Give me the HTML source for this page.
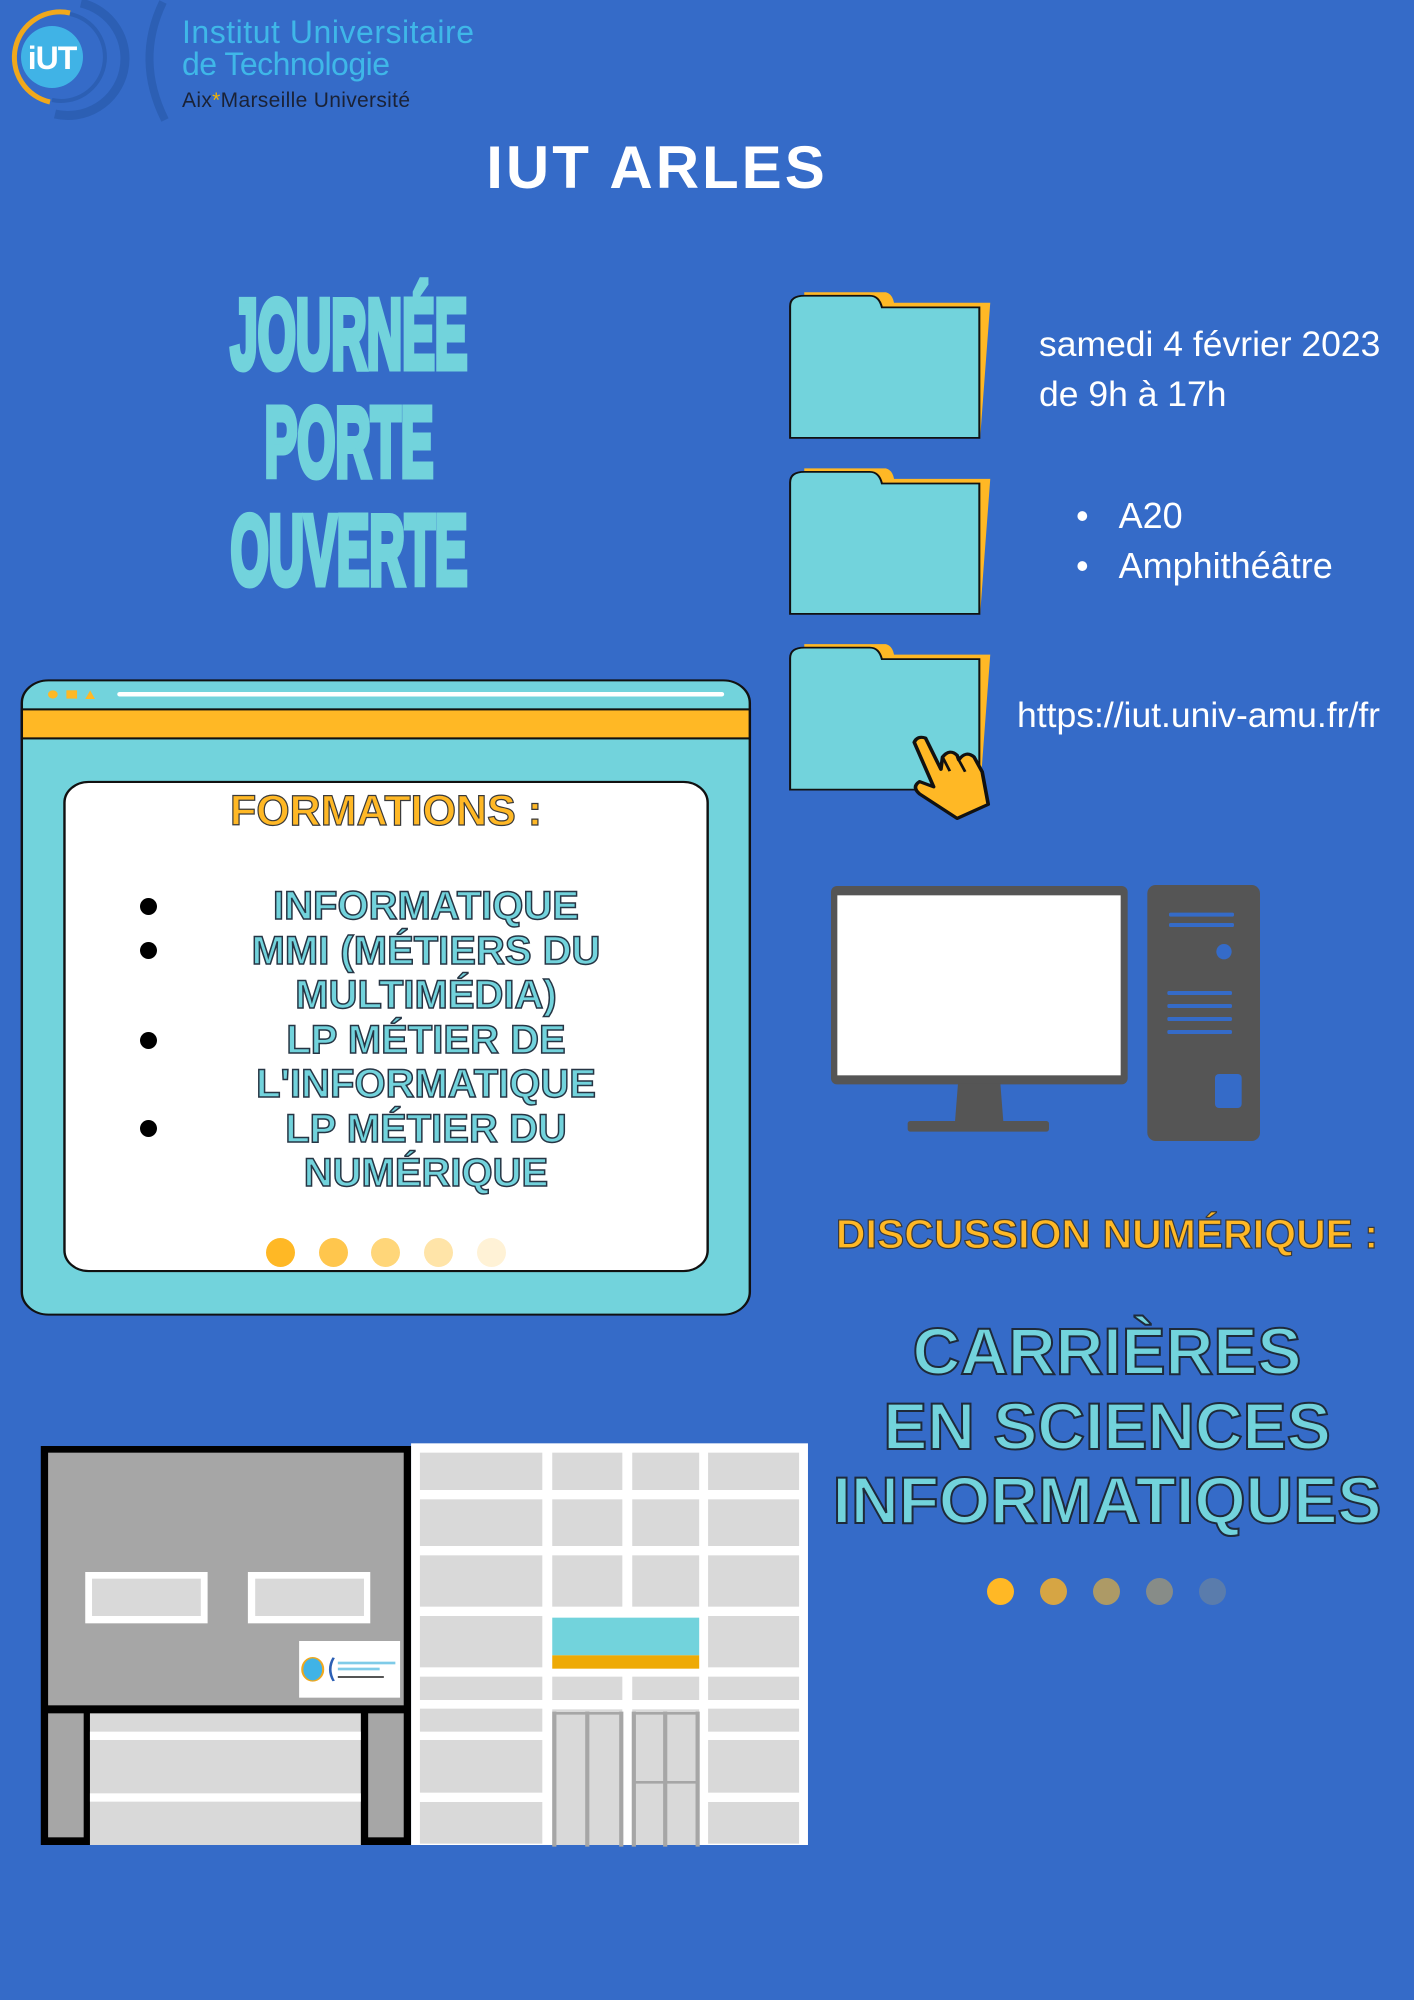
<!DOCTYPE html>
<html><head><meta charset="utf-8">
<style>
*{margin:0;padding:0;box-sizing:border-box}
body{width:1414px;height:2000px;background:#356bc8;position:relative;overflow:hidden;font-family:"Liberation Sans",sans-serif}
.abs{position:absolute}
.c{text-align:center;white-space:nowrap}
.cy{color:#72d3dc;-webkit-text-stroke:1.5px #263544;font-weight:bold}
.or{color:#ffb825;-webkit-text-stroke:1.2px #3a3a3a;font-weight:bold}
.dot{position:absolute;width:29px;height:29px;border-radius:50%}
</style></head><body>

<!-- logo -->
<svg class="abs" style="left:0;top:0" width="500" height="130">
  <path d="M81 3 A56 56 0 0 1 55 114" fill="none" stroke="#2c5fb4" stroke-width="9"/>
  <path d="M70 14 A43 43 0 0 1 52 100" fill="none" stroke="#2c5fb4" stroke-width="4"/>
  <path d="M70 13 A43 43 0 1 0 50 102" fill="none" stroke="#f0a81c" stroke-width="5"/>
  <circle cx="52" cy="57" r="31" fill="#40b3e6"/>
  <text x="52" y="69" text-anchor="middle" font-family="Liberation Sans" font-weight="bold" font-size="32" fill="#fff" letter-spacing="-1">iUT</text>
  <path d="M163 2 Q135 60 165 120" fill="none" stroke="#2c5fb4" stroke-width="8"/>
  <text x="182" y="43" font-family="Liberation Sans" font-size="32" fill="#3fb7e8" textLength="292">Institut Universitaire</text>
  <text x="182" y="75" font-family="Liberation Sans" font-size="32" fill="#3fb7e8" textLength="208">de Technologie</text>
  <text x="182" y="107" font-family="Liberation Sans" font-size="21" fill="#1a2236" textLength="228">Aix<tspan fill="#f4b400">*</tspan>Marseille Université</text>
</svg>

<div class="abs c" style="left:457px;width:400px;top:138px;font-size:60px;font-weight:bold;color:#fff;letter-spacing:3px;line-height:60px">IUT ARLES</div>

<!-- JOURNEE PORTE OUVERTE -->
<div class="abs c" style="left:99px;width:500px;top:280px;color:#72d3dc;-webkit-text-stroke:7px #72d3dc;font-weight:bold;font-size:98px;line-height:108px;transform:scaleX(0.5);transform-origin:250px 0">JOURNÉE<br>PORTE<br>OUVERTE</div>

<!-- folders -->
<svg class="abs" style="left:780px;top:280px" width="634" height="550" viewBox="0 0 1568 1568" preserveAspectRatio="none">
  <g id="f">
    <path d="M60 35 L262 35 Q278 40 282 65 L520 65 L495 450 L60 450 Z" fill="#ffb825"/>
    <path d="M25 450 L25 75 Q25 45 60 45 L222 45 Q245 45 252 78 L493 78 L493 450 Z" fill="#72d3dc" stroke="#111" stroke-width="5"/>
  </g>
  <use href="#f" y="502"/>
  <use href="#f" y="1003"/>
  <path d="M332 1318 Q340 1298 360 1306 L398 1395 L402 1360 Q420 1335 438 1355 L442 1368 Q460 1340 480 1360 L500 1402 L515 1495 L438 1535 L345 1465 Q325 1445 345 1430 L380 1445 Z" fill="#ffb825" stroke="#111" stroke-width="9" stroke-linejoin="round"/>
  <path d="M402 1360 L420 1400 M442 1368 L458 1402" stroke="#111" stroke-width="7" fill="none"/>
</svg>

<div class="abs" style="left:1039px;top:319px;color:#fff;font-size:35.5px;line-height:50px;white-space:nowrap">samedi 4 février 2023<br>de 9h à 17h</div>
<div class="abs" style="left:1076px;top:491px;color:#fff;font-size:36px;line-height:50px;white-space:nowrap">•&nbsp;&nbsp;&nbsp;A20<br>•&nbsp;&nbsp;&nbsp;Amphithéâtre</div>
<div class="abs" style="left:1017px;top:693px;color:#fff;font-size:35.5px;line-height:44px;white-space:nowrap">https://iut.univ-amu.fr/fr</div>

<!-- browser window -->
<svg class="abs" style="left:0;top:670px" width="760" height="650" viewBox="0 0 1568 1568" preserveAspectRatio="none">
  <rect x="45" y="25" width="1502" height="1530" rx="55" fill="#72d3dc" stroke="#111" stroke-width="5"/>
  <rect x="45" y="95" width="1502" height="70" fill="#ffb825" stroke="#111" stroke-width="5"/>
  <ellipse cx="109" cy="59" rx="10" ry="10" fill="#ffb825"/>
  <rect x="137" y="49" width="22" height="20" fill="#ffb825"/>
  <path d="M186 49 L196 70 L176 70 Z" fill="#ffb825"/>
  <rect x="242" y="53" width="1252" height="11" rx="5" fill="#fff"/>
  <rect x="133" y="270" width="1327" height="1180" rx="50" fill="#fff" stroke="#111" stroke-width="5"/>
</svg>
<div class="abs c or" style="left:186px;width:400px;top:786px;font-size:43px;line-height:50px">FORMATIONS :</div>
<div class="abs c cy" style="left:176px;width:500px;top:884px;font-size:40px;line-height:44.5px">INFORMATIQUE<br>MMI (MÉTIERS DU<br>MULTIMÉDIA)<br>LP MÉTIER DE<br>L'INFORMATIQUE<br>LP MÉTIER DU<br>NUMÉRIQUE</div>
<div class="dot" style="left:140px;top:898px;width:17px;height:17px;background:#000"></div>
<div class="dot" style="left:140px;top:942px;width:17px;height:17px;background:#000"></div>
<div class="dot" style="left:140px;top:1032px;width:17px;height:17px;background:#000"></div>
<div class="dot" style="left:140px;top:1120px;width:17px;height:17px;background:#000"></div>
<div class="dot" style="left:266px;top:1238px;background:#ffb825"></div>
<div class="dot" style="left:319px;top:1238px;background:#ffc64d"></div>
<div class="dot" style="left:371px;top:1238px;background:#ffd679"></div>
<div class="dot" style="left:424px;top:1238px;background:#ffe4a8"></div>
<div class="dot" style="left:477px;top:1238px;background:#fff2d6"></div>

<!-- computer -->
<svg class="abs" style="left:820px;top:870px" width="460" height="290" viewBox="0 0 1380 870">
  <rect x="33" y="48" width="890" height="595" rx="18" fill="#555"/>
  <rect x="52" y="76" width="850" height="540" fill="#fff"/>
  <path d="M414 640 L541 640 L550 755 L405 755 Z" fill="#555"/>
  <rect x="263" y="753" width="424" height="32" rx="8" fill="#555"/>
  <rect x="982" y="45" width="338" height="768" rx="25" fill="#555"/>
  <g fill="#356bc8">
    <rect x="1047" y="128" width="195" height="12" rx="5"/>
    <rect x="1047" y="159" width="195" height="12" rx="5"/>
    <circle cx="1212" cy="245" r="23"/>
    <rect x="1042" y="363" width="194" height="12" rx="5"/>
    <rect x="1042" y="402" width="194" height="12" rx="5"/>
    <rect x="1042" y="441" width="194" height="12" rx="5"/>
    <rect x="1042" y="480" width="194" height="12" rx="5"/>
    <rect x="1185" y="612" width="80" height="102" rx="12"/>
  </g>
</svg>

<div class="abs c or" style="left:807px;width:600px;top:1209px;font-size:41px;line-height:50px">DISCUSSION NUMÉRIQUE :</div>
<div class="abs c cy" style="left:807px;width:600px;top:1314px;font-size:66px;line-height:74.5px;-webkit-text-stroke:2px #1e2a3a">CARRIÈRES<br>EN SCIENCES<br>INFORMATIQUES</div>
<div class="dot" style="left:987px;top:1578px;width:27px;height:27px;background:#ffb825"></div>
<div class="dot" style="left:1040px;top:1578px;width:27px;height:27px;background:#d6a544"></div>
<div class="dot" style="left:1093px;top:1578px;width:27px;height:27px;background:#ad9a66"></div>
<div class="dot" style="left:1146px;top:1578px;width:27px;height:27px;background:#878c88"></div>
<div class="dot" style="left:1199px;top:1578px;width:27px;height:27px;background:#5a7cac"></div>

<!-- building -->
<svg class="abs" style="left:0;top:1430px" width="820" height="420" viewBox="0 0 1568 1260" preserveAspectRatio="none">
  <rect x="786" y="40" width="759" height="1205" fill="#fff"/>
  <g fill="#d9d9d9">
    <rect x="803" y="68" width="234" height="112"/><rect x="1056" y="68" width="134" height="112"/><rect x="1209" y="68" width="128" height="112"/><rect x="1354" y="68" width="174" height="112"/>
    <rect x="803" y="208" width="234" height="140"/><rect x="1056" y="208" width="134" height="140"/><rect x="1209" y="208" width="128" height="140"/><rect x="1354" y="208" width="174" height="140"/>
    <rect x="803" y="376" width="234" height="154"/><rect x="1056" y="376" width="134" height="154"/><rect x="1209" y="376" width="128" height="154"/><rect x="1354" y="376" width="174" height="154"/>
    <rect x="803" y="558" width="234" height="154"/><rect x="1354" y="558" width="174" height="154"/>
    <rect x="803" y="740" width="234" height="70"/><rect x="1056" y="740" width="134" height="70"/><rect x="1209" y="740" width="128" height="70"/><rect x="1354" y="740" width="174" height="70"/>
    <rect x="803" y="836" width="234" height="69"/><rect x="1354" y="836" width="174" height="69"/>
    <rect x="803" y="930" width="234" height="158"/><rect x="1354" y="930" width="174" height="158"/>
    <rect x="803" y="1116" width="234" height="125"/><rect x="1354" y="1116" width="174" height="125"/>
    <rect x="1056" y="838" width="134" height="407"/><rect x="1209" y="838" width="128" height="407"/>
  </g>
  <rect x="1056" y="563" width="281" height="113" fill="#72d3dc"/>
  <rect x="1056" y="676" width="281" height="40" fill="#eeaa05"/>
  <g stroke="#a6a6a6" stroke-width="8" fill="none">
    <path d="M1058 850 L1188 850 M1060 845 V1250 M1123 845 V1250 M1188 845 V1250"/>
    <path d="M1211 850 L1335 850 M1212 845 V1250 M1272 845 V1250 M1334 845 V1250 M1211 1057 H1335"/>
  </g>
  <rect x="78" y="48" width="708" height="1197" fill="#000"/>
  <rect x="92" y="68" width="680" height="758" fill="#a6a6a6"/>
  <rect x="163" y="426" width="234" height="154" fill="#fff"/><rect x="176" y="446" width="208" height="112" fill="#d9d9d9"/>
  <rect x="474" y="426" width="234" height="154" fill="#fff"/><rect x="488" y="446" width="208" height="112" fill="#d9d9d9"/>
  <rect x="572" y="633" width="193" height="170" fill="#fff"/>
  <ellipse cx="598" cy="718" rx="20" ry="35" fill="#40b3e6" stroke="#f0a81c" stroke-width="4"/>
  <path d="M638 683 Q625 718 638 753" stroke="#2c5fb4" stroke-width="5" fill="none"/>
  <rect x="646" y="695" width="110" height="8" fill="#7fcbe8"/><rect x="646" y="713" width="80" height="8" fill="#7fcbe8"/><rect x="646" y="738" width="88" height="6" fill="#555"/>
  <rect x="92" y="850" width="68" height="372" fill="#a6a6a6"/>
  <rect x="704" y="850" width="68" height="372" fill="#a6a6a6"/>
  <rect x="172" y="850" width="518" height="395" fill="#d9d9d9"/>
  <rect x="172" y="905" width="518" height="25" fill="#fff"/>
  <rect x="172" y="1090" width="518" height="25" fill="#fff"/>
</svg>
</body></html>
